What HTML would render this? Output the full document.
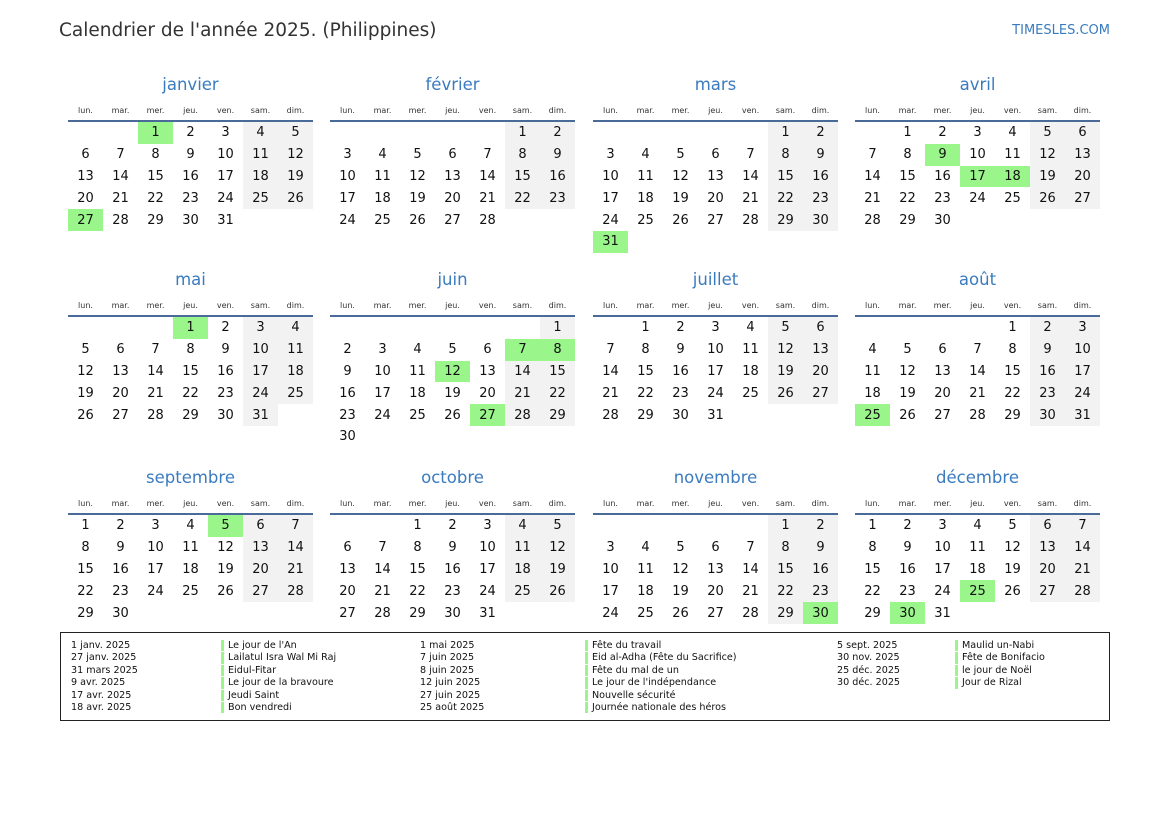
<!DOCTYPE html>
<html><head><meta charset="utf-8"><style>
*{margin:0;padding:0;box-sizing:border-box}
body{width:1169px;height:827px;background:#fff;font-family:"DejaVu Sans","Liberation Sans",sans-serif;color:#111;position:relative;overflow:hidden}
.t{position:absolute;left:59px;top:20px;font-size:18.5px;color:#333}
.s{position:absolute;right:59px;top:23px;font-size:13px;color:#3a7bbf}
.m{position:absolute;width:245px}
.mt{height:24px;line-height:24px;text-align:center;font-size:16.5px;color:#3a7bbf}
.wd{display:flex;margin-top:8px;height:17px;border-bottom:2px solid #4a6a9a}
.wd span{width:35px;text-align:center;font-size:8px;color:#333;line-height:12px}
table{border-collapse:collapse;table-layout:fixed;width:245px}
td{width:35px;height:21.8px;text-align:center;font-size:13px;padding:0}
.w{background:#f2f2f2}.h{background:#9af58b}
.lg{position:absolute;left:60px;top:632px;width:1050px;height:89px;border:1.5px solid #222}
.c{position:absolute;top:7px;font-size:9.6px;line-height:12.4px;color:#111}
.b div{border-left:3px solid #9af58b;padding-left:4px;margin-bottom:1px;line-height:11.4px}
</style></head><body>
<div class="t">Calendrier de l'année 2025. (Philippines)</div>
<div class="s">TIMESLES.COM</div>

<div class="m" style="left:68px;top:73px"><div class="mt">janvier</div><div class="wd"><span>lun.</span><span>mar.</span><span>mer.</span><span>jeu.</span><span>ven.</span><span>sam.</span><span>dim.</span></div><table>
<tr><td></td><td></td><td class=h>1</td><td>2</td><td>3</td><td class=w>4</td><td class=w>5</td></tr>
<tr><td>6</td><td>7</td><td>8</td><td>9</td><td>10</td><td class=w>11</td><td class=w>12</td></tr>
<tr><td>13</td><td>14</td><td>15</td><td>16</td><td>17</td><td class=w>18</td><td class=w>19</td></tr>
<tr><td>20</td><td>21</td><td>22</td><td>23</td><td>24</td><td class=w>25</td><td class=w>26</td></tr>
<tr><td class=h>27</td><td>28</td><td>29</td><td>30</td><td>31</td><td></td><td></td></tr></table></div>

<div class="m" style="left:330px;top:73px"><div class="mt">février</div><div class="wd"><span>lun.</span><span>mar.</span><span>mer.</span><span>jeu.</span><span>ven.</span><span>sam.</span><span>dim.</span></div><table>
<tr><td></td><td></td><td></td><td></td><td></td><td class=w>1</td><td class=w>2</td></tr>
<tr><td>3</td><td>4</td><td>5</td><td>6</td><td>7</td><td class=w>8</td><td class=w>9</td></tr>
<tr><td>10</td><td>11</td><td>12</td><td>13</td><td>14</td><td class=w>15</td><td class=w>16</td></tr>
<tr><td>17</td><td>18</td><td>19</td><td>20</td><td>21</td><td class=w>22</td><td class=w>23</td></tr>
<tr><td>24</td><td>25</td><td>26</td><td>27</td><td>28</td><td></td><td></td></tr></table></div>

<div class="m" style="left:593px;top:73px"><div class="mt">mars</div><div class="wd"><span>lun.</span><span>mar.</span><span>mer.</span><span>jeu.</span><span>ven.</span><span>sam.</span><span>dim.</span></div><table>
<tr><td></td><td></td><td></td><td></td><td></td><td class=w>1</td><td class=w>2</td></tr>
<tr><td>3</td><td>4</td><td>5</td><td>6</td><td>7</td><td class=w>8</td><td class=w>9</td></tr>
<tr><td>10</td><td>11</td><td>12</td><td>13</td><td>14</td><td class=w>15</td><td class=w>16</td></tr>
<tr><td>17</td><td>18</td><td>19</td><td>20</td><td>21</td><td class=w>22</td><td class=w>23</td></tr>
<tr><td>24</td><td>25</td><td>26</td><td>27</td><td>28</td><td class=w>29</td><td class=w>30</td></tr>
<tr><td class=h>31</td><td></td><td></td><td></td><td></td><td></td><td></td></tr></table></div>

<div class="m" style="left:855px;top:73px"><div class="mt">avril</div><div class="wd"><span>lun.</span><span>mar.</span><span>mer.</span><span>jeu.</span><span>ven.</span><span>sam.</span><span>dim.</span></div><table>
<tr><td></td><td>1</td><td>2</td><td>3</td><td>4</td><td class=w>5</td><td class=w>6</td></tr>
<tr><td>7</td><td>8</td><td class=h>9</td><td>10</td><td>11</td><td class=w>12</td><td class=w>13</td></tr>
<tr><td>14</td><td>15</td><td>16</td><td class=h>17</td><td class=h>18</td><td class=w>19</td><td class=w>20</td></tr>
<tr><td>21</td><td>22</td><td>23</td><td>24</td><td>25</td><td class=w>26</td><td class=w>27</td></tr>
<tr><td>28</td><td>29</td><td>30</td><td></td><td></td><td></td><td></td></tr></table></div>

<div class="m" style="left:68px;top:268px"><div class="mt">mai</div><div class="wd"><span>lun.</span><span>mar.</span><span>mer.</span><span>jeu.</span><span>ven.</span><span>sam.</span><span>dim.</span></div><table>
<tr><td></td><td></td><td></td><td class=h>1</td><td>2</td><td class=w>3</td><td class=w>4</td></tr>
<tr><td>5</td><td>6</td><td>7</td><td>8</td><td>9</td><td class=w>10</td><td class=w>11</td></tr>
<tr><td>12</td><td>13</td><td>14</td><td>15</td><td>16</td><td class=w>17</td><td class=w>18</td></tr>
<tr><td>19</td><td>20</td><td>21</td><td>22</td><td>23</td><td class=w>24</td><td class=w>25</td></tr>
<tr><td>26</td><td>27</td><td>28</td><td>29</td><td>30</td><td class=w>31</td><td></td></tr></table></div>

<div class="m" style="left:330px;top:268px"><div class="mt">juin</div><div class="wd"><span>lun.</span><span>mar.</span><span>mer.</span><span>jeu.</span><span>ven.</span><span>sam.</span><span>dim.</span></div><table>
<tr><td></td><td></td><td></td><td></td><td></td><td></td><td class=w>1</td></tr>
<tr><td>2</td><td>3</td><td>4</td><td>5</td><td>6</td><td class=h>7</td><td class=h>8</td></tr>
<tr><td>9</td><td>10</td><td>11</td><td class=h>12</td><td>13</td><td class=w>14</td><td class=w>15</td></tr>
<tr><td>16</td><td>17</td><td>18</td><td>19</td><td>20</td><td class=w>21</td><td class=w>22</td></tr>
<tr><td>23</td><td>24</td><td>25</td><td>26</td><td class=h>27</td><td class=w>28</td><td class=w>29</td></tr>
<tr><td>30</td><td></td><td></td><td></td><td></td><td></td><td></td></tr></table></div>

<div class="m" style="left:593px;top:268px"><div class="mt">juillet</div><div class="wd"><span>lun.</span><span>mar.</span><span>mer.</span><span>jeu.</span><span>ven.</span><span>sam.</span><span>dim.</span></div><table>
<tr><td></td><td>1</td><td>2</td><td>3</td><td>4</td><td class=w>5</td><td class=w>6</td></tr>
<tr><td>7</td><td>8</td><td>9</td><td>10</td><td>11</td><td class=w>12</td><td class=w>13</td></tr>
<tr><td>14</td><td>15</td><td>16</td><td>17</td><td>18</td><td class=w>19</td><td class=w>20</td></tr>
<tr><td>21</td><td>22</td><td>23</td><td>24</td><td>25</td><td class=w>26</td><td class=w>27</td></tr>
<tr><td>28</td><td>29</td><td>30</td><td>31</td><td></td><td></td><td></td></tr></table></div>

<div class="m" style="left:855px;top:268px"><div class="mt">août</div><div class="wd"><span>lun.</span><span>mar.</span><span>mer.</span><span>jeu.</span><span>ven.</span><span>sam.</span><span>dim.</span></div><table>
<tr><td></td><td></td><td></td><td></td><td>1</td><td class=w>2</td><td class=w>3</td></tr>
<tr><td>4</td><td>5</td><td>6</td><td>7</td><td>8</td><td class=w>9</td><td class=w>10</td></tr>
<tr><td>11</td><td>12</td><td>13</td><td>14</td><td>15</td><td class=w>16</td><td class=w>17</td></tr>
<tr><td>18</td><td>19</td><td>20</td><td>21</td><td>22</td><td class=w>23</td><td class=w>24</td></tr>
<tr><td class=h>25</td><td>26</td><td>27</td><td>28</td><td>29</td><td class=w>30</td><td class=w>31</td></tr></table></div>

<div class="m" style="left:68px;top:466px"><div class="mt">septembre</div><div class="wd"><span>lun.</span><span>mar.</span><span>mer.</span><span>jeu.</span><span>ven.</span><span>sam.</span><span>dim.</span></div><table>
<tr><td>1</td><td>2</td><td>3</td><td>4</td><td class=h>5</td><td class=w>6</td><td class=w>7</td></tr>
<tr><td>8</td><td>9</td><td>10</td><td>11</td><td>12</td><td class=w>13</td><td class=w>14</td></tr>
<tr><td>15</td><td>16</td><td>17</td><td>18</td><td>19</td><td class=w>20</td><td class=w>21</td></tr>
<tr><td>22</td><td>23</td><td>24</td><td>25</td><td>26</td><td class=w>27</td><td class=w>28</td></tr>
<tr><td>29</td><td>30</td><td></td><td></td><td></td><td></td><td></td></tr></table></div>

<div class="m" style="left:330px;top:466px"><div class="mt">octobre</div><div class="wd"><span>lun.</span><span>mar.</span><span>mer.</span><span>jeu.</span><span>ven.</span><span>sam.</span><span>dim.</span></div><table>
<tr><td></td><td></td><td>1</td><td>2</td><td>3</td><td class=w>4</td><td class=w>5</td></tr>
<tr><td>6</td><td>7</td><td>8</td><td>9</td><td>10</td><td class=w>11</td><td class=w>12</td></tr>
<tr><td>13</td><td>14</td><td>15</td><td>16</td><td>17</td><td class=w>18</td><td class=w>19</td></tr>
<tr><td>20</td><td>21</td><td>22</td><td>23</td><td>24</td><td class=w>25</td><td class=w>26</td></tr>
<tr><td>27</td><td>28</td><td>29</td><td>30</td><td>31</td><td></td><td></td></tr></table></div>

<div class="m" style="left:593px;top:466px"><div class="mt">novembre</div><div class="wd"><span>lun.</span><span>mar.</span><span>mer.</span><span>jeu.</span><span>ven.</span><span>sam.</span><span>dim.</span></div><table>
<tr><td></td><td></td><td></td><td></td><td></td><td class=w>1</td><td class=w>2</td></tr>
<tr><td>3</td><td>4</td><td>5</td><td>6</td><td>7</td><td class=w>8</td><td class=w>9</td></tr>
<tr><td>10</td><td>11</td><td>12</td><td>13</td><td>14</td><td class=w>15</td><td class=w>16</td></tr>
<tr><td>17</td><td>18</td><td>19</td><td>20</td><td>21</td><td class=w>22</td><td class=w>23</td></tr>
<tr><td>24</td><td>25</td><td>26</td><td>27</td><td>28</td><td class=w>29</td><td class=h>30</td></tr></table></div>

<div class="m" style="left:855px;top:466px"><div class="mt">décembre</div><div class="wd"><span>lun.</span><span>mar.</span><span>mer.</span><span>jeu.</span><span>ven.</span><span>sam.</span><span>dim.</span></div><table>
<tr><td>1</td><td>2</td><td>3</td><td>4</td><td>5</td><td class=w>6</td><td class=w>7</td></tr>
<tr><td>8</td><td>9</td><td>10</td><td>11</td><td>12</td><td class=w>13</td><td class=w>14</td></tr>
<tr><td>15</td><td>16</td><td>17</td><td>18</td><td>19</td><td class=w>20</td><td class=w>21</td></tr>
<tr><td>22</td><td>23</td><td>24</td><td class=h>25</td><td>26</td><td class=w>27</td><td class=w>28</td></tr>
<tr><td>29</td><td class=h>30</td><td>31</td><td></td><td></td><td></td><td></td></tr></table></div>

<div class="lg">
<div class="c" style="left:10px"><div>1 janv. 2025</div><div>27 janv. 2025</div><div>31 mars 2025</div><div>9 avr. 2025</div><div>17 avr. 2025</div><div>18 avr. 2025</div></div>
<div class="c b" style="left:160px"><div>Le jour de l'An</div><div>Lailatul Isra Wal Mi Raj</div><div>Eidul-Fitar</div><div>Le jour de la bravoure</div><div>Jeudi Saint</div><div>Bon vendredi</div></div>
<div class="c" style="left:359px"><div>1 mai 2025</div><div>7 juin 2025</div><div>8 juin 2025</div><div>12 juin 2025</div><div>27 juin 2025</div><div>25 août 2025</div></div>
<div class="c b" style="left:524px"><div>Fête du travail</div><div>Eid al-Adha (Fête du Sacrifice)</div><div>Fête du mal de un</div><div>Le jour de l'indépendance</div><div>Nouvelle sécurité</div><div>Journée nationale des héros</div></div>
<div class="c" style="left:776px"><div>5 sept. 2025</div><div>30 nov. 2025</div><div>25 déc. 2025</div><div>30 déc. 2025</div></div>
<div class="c b" style="left:894px"><div>Maulid un-Nabi</div><div>Fête de Bonifacio</div><div>le jour de Noël</div><div>Jour de Rizal</div></div>
</div>
</body></html>
